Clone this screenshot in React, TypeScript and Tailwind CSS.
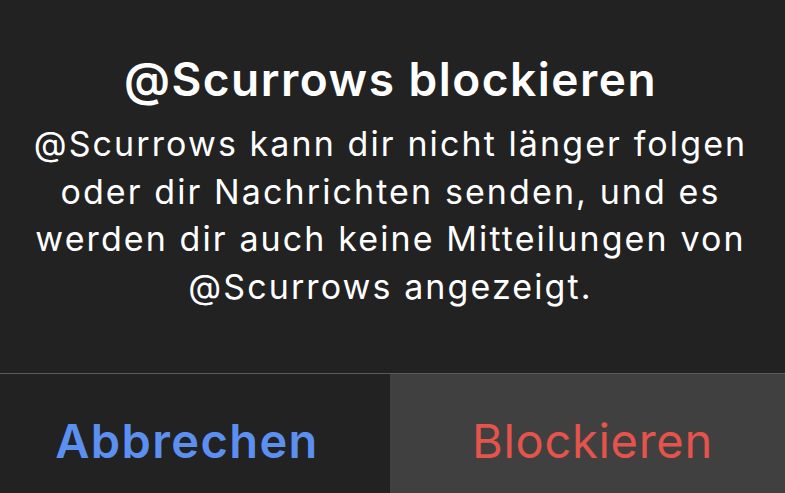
export default function App() {
  return (
    <div className="w-[785px] h-[493px] overflow-hidden bg-[#222222] text-white" style={{ fontFamily: 'Inter, "Liberation Sans", Arial, sans-serif' }}>
      <div className="h-[373px] pr-[4px] pt-[51px] flex flex-col items-center text-center">
        <div className="text-[46px] leading-[56px] font-semibold tracking-[1.5px] whitespace-nowrap">@Scurrows blockieren</div>
        <div className="mt-[13px] text-[34px] leading-[47.5px] tracking-[2.1px] whitespace-nowrap">
          @Scurrows kann dir nicht länger folgen
          <br />
          oder dir Nachrichten senden, und es
          <br />
          werden dir auch keine Mitteilungen von
          <br />
          @Scurrows angezeigt.
        </div>
      </div>
      <div className="h-px bg-[#5a5a5a]" />
      <div className="grid grid-cols-[390px_1fr] h-[119px]">
        <div className="bg-[#222222] pt-[37px] pr-[16px] text-center text-[47px] leading-[60px] font-semibold tracking-[1.4px] text-[#5b8ff0] whitespace-nowrap">Abbrechen</div>
        <div className="bg-[#404040] pt-[37px] pl-[10px] text-center text-[47px] leading-[60px] tracking-[0.7px] text-[#e5534b] whitespace-nowrap">Blockieren</div>
      </div>
    </div>
  );
}
